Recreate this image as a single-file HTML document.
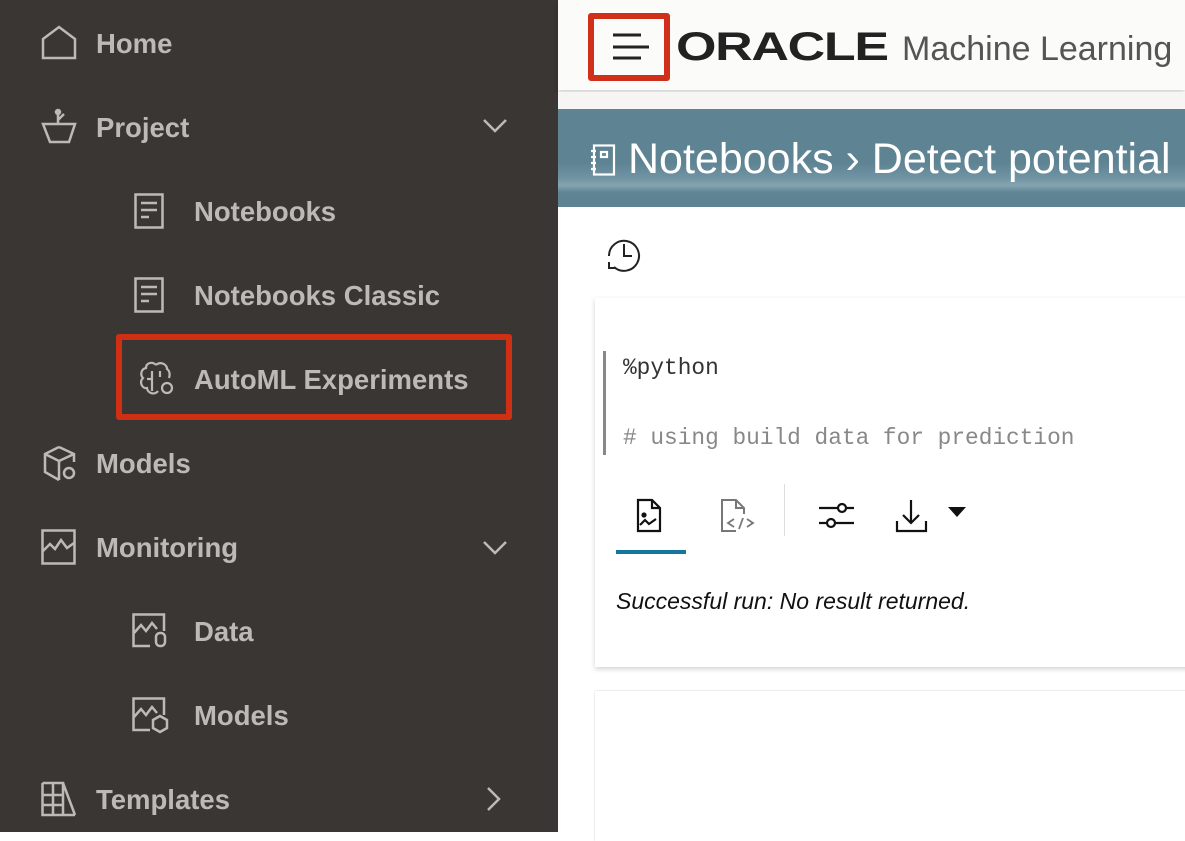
<!DOCTYPE html>
<html><head><meta charset="utf-8"><style>
*{margin:0;padding:0;box-sizing:border-box}
body{width:1185px;height:832px;overflow:hidden;position:relative;background:#fff;font-family:"Liberation Sans",sans-serif}
#side{position:absolute;left:0;top:0;width:558px;height:832px;background:#3a3633}
.it{position:absolute;color:#bcbab7;font-weight:bold;font-size:27.5px;line-height:30px}
.ic{position:absolute}
svg{overflow:visible}
#hdr{position:absolute;left:558px;top:0;width:627px;height:90px;background:#fbfbfa;box-shadow:0 2px 4px rgba(0,0,0,.2)}
#gap{position:absolute;left:558px;top:92px;width:627px;height:17px;background:#f6f5f3}
#ban{position:absolute;left:558px;top:109px;width:627px;height:98px;background:linear-gradient(180deg,#5e8393 0%,#5e8393 55%,#6f93a2 70%,#86a4b0 78%,#5f8595 85%,#5e8393 100%)}
.card{position:absolute;left:595px;width:600px;background:#fff;box-shadow:0 2px 5px rgba(0,0,0,.18)}
.mono{font-family:"Liberation Mono",monospace;font-size:22.8px;position:absolute}
</style></head><body>
<div id="side">
<svg class="ic" style="left:41px;top:25px" width="36" height="36" viewBox="0 0 36 36" fill="none" stroke="#bcbab7" stroke-width="2.5"><path d="M2 33V14L18 2L34 14V33Z"/></svg>
<div class="it" style="left:96px;top:29px">Home</div>
<svg class="ic" style="left:41px;top:108px" width="36" height="36" viewBox="0 0 36 36" fill="none" stroke="#bcbab7" stroke-width="2.5"><path d="M2 16H34L28 34H9Z"/><path d="M17 16V3M17 12L23 6"/><circle cx="17" cy="4" r="2" fill="#bcbab7"/></svg>
<div class="it" style="left:96px;top:113px">Project</div>
<svg class="ic" style="left:482px;top:118px" width="26" height="16" fill="none" stroke="#bcbab7" stroke-width="2.5"><path d="M2 2L13 13L24 2"/></svg>
<svg class="ic" style="left:134px;top:193px" width="30" height="36" fill="none" stroke="#bcbab7" stroke-width="2.5"><rect x="1.5" y="1.5" width="27" height="33"/><path d="M7 10H23M7 17H23M7 24H15"/></svg>
<div class="it" style="left:194px;top:197px">Notebooks</div>
<svg class="ic" style="left:134px;top:277px" width="30" height="36" fill="none" stroke="#bcbab7" stroke-width="2.5"><rect x="1.5" y="1.5" width="27" height="33"/><path d="M7 10H23M7 17H23M7 24H15"/></svg>
<div class="it" style="left:194px;top:281px">Notebooks Classic</div>
<div style="position:absolute;left:116px;top:334px;width:396px;height:86px;border:6px solid #cf2f12;border-radius:3px"></div>
<svg class="ic" style="left:138px;top:361px" width="38" height="36" fill="none" stroke="#bcbab7" stroke-width="2.2"><path d="M18 4C14 0 8 2 8 7C3 8 2 14 5 17C1 21 4 28 9 27C10 33 17 34 20 30"/><path d="M18 4C22 0 29 3 29 8C32 10 32 14 31 17M14 10V30M14 18H9M22 10V16"/><circle cx="29" cy="27" r="5"/></svg>
<div class="it" style="left:194px;top:365px">AutoML Experiments</div>
<svg class="ic" style="left:42px;top:445px" width="36" height="36" fill="none" stroke="#bcbab7" stroke-width="2.5"><path d="M17 2L32 9V17M17 2L3 9V27L17 35M3 9L17 16L32 9M17 16V35"/><circle cx="27" cy="28" r="5"/></svg>
<div class="it" style="left:96px;top:449px">Models</div>
<svg class="ic" style="left:41px;top:529px" width="36" height="36" fill="none" stroke="#bcbab7" stroke-width="2.5"><rect x="1.5" y="1.5" width="32" height="33"/><path d="M2 22L9 15L14 20L20 11L26 19L33 14"/></svg>
<div class="it" style="left:96px;top:533px">Monitoring</div>
<svg class="ic" style="left:482px;top:540px" width="26" height="16" fill="none" stroke="#bcbab7" stroke-width="2.5"><path d="M2 2L13 13L24 2"/></svg>
<svg class="ic" style="left:132px;top:613px" width="36" height="36" fill="none" stroke="#bcbab7" stroke-width="2.5"><path d="M18 33H1.5V1.5H32V18"/><path d="M2 20L9 12L14 18L20 10L25 16"/><rect x="24" y="20" width="9" height="13" rx="4"/></svg>
<div class="it" style="left:194px;top:617px">Data</div>
<svg class="ic" style="left:132px;top:697px" width="36" height="36" fill="none" stroke="#bcbab7" stroke-width="2.5"><path d="M18 33H1.5V1.5H32V18"/><path d="M2 20L9 12L14 18L20 10L25 16"/><path d="M28 19L35 23V31L28 35L21 31V23Z"/></svg>
<div class="it" style="left:194px;top:701px">Models</div>
<svg class="ic" style="left:41px;top:781px" width="36" height="36" fill="none" stroke="#bcbab7" stroke-width="2.5"><path d="M1.5 2V34H34M1.5 2H12V34M12 2H22V34M22 2L34 34M1.5 14H22M1.5 24H22"/></svg>
<div class="it" style="left:96px;top:785px">Templates</div>
<svg class="ic" style="left:486px;top:786px" width="16" height="26" fill="none" stroke="#bcbab7" stroke-width="2.5"><path d="M2 2L13 13L2 24"/></svg>
</div>
<div id="hdr">
<div style="position:absolute;left:30px;top:13px;width:82px;height:68px;border:6px solid #d0301a;border-radius:3px"></div>
<svg class="ic" style="left:53px;top:31px" width="40" height="30"><path d="M2 4H30M2 16H38M2 27H30" stroke="#222" stroke-width="3"/></svg>
<div style="position:absolute;left:118px;top:25px;font-size:40px;line-height:44px;font-weight:bold;color:#222;letter-spacing:-1px;transform:scaleX(1.3);transform-origin:left">ORACLE</div>
<div style="position:absolute;left:344px;top:29px;font-size:34px;line-height:40px;color:#555">Machine Learning</div>
</div>
<div id="gap"></div>
<div id="ban">
<svg class="ic" style="left:32px;top:35px" width="26" height="32" fill="none" stroke="#fff" stroke-width="2.2"><rect x="4" y="1.5" width="20" height="29"/><rect x="11" y="8" width="6" height="5"/><path d="M1 7H6M1 13H6M1 19H6M1 25H6"/></svg>
<div style="position:absolute;left:70px;top:27px;font-size:43px;line-height:46px;color:#fff;white-space:nowrap">Notebooks › Detect potential</div>
</div>
<svg class="ic" style="left:606px;top:236px" width="36" height="36" fill="none" stroke="#222" stroke-width="2"><path d="M8 31A15 15 0 1 0 3 20"/><path d="M3 26V32H9"/><path d="M18 8V20H26"/></svg>
<div class="card" style="top:298px;height:369px">
<div style="position:absolute;left:8px;top:53px;width:3px;height:104px;background:#888"></div>
<div class="mono" style="left:28px;top:57px;color:#333">%python</div>
<div class="mono" style="left:28px;top:127px;color:#888"># using build data for prediction</div>
<svg class="ic" style="left:41px;top:200px" width="28" height="36" fill="none" stroke="#111" stroke-width="2.2"><path d="M2 2H16L24 10V33H2Z M16 2V10H24"/><circle cx="8" cy="17" r="1.5" fill="#111"/><path d="M4 27L9 22L13 26L20 21"/></svg>
<svg class="ic" style="left:125px;top:200px" width="34" height="36" fill="none" stroke="#777" stroke-width="2"><path d="M16 33H2V2H16L24 10V16M16 2V10H24"/><path d="M14 21L8 25L14 29M19 31L23 20M27 21L33 25L27 29" stroke-width="1.8"/></svg>
<div style="position:absolute;left:189px;top:186px;width:1px;height:52px;background:#ddd"></div>
<svg class="ic" style="left:223px;top:203px" width="36" height="28" fill="none" stroke="#111" stroke-width="2.2"><path d="M1 7H20M28 7H36M1 22H9M17 22H36"/><circle cx="24" cy="7" r="4"/><circle cx="13" cy="22" r="4"/></svg>
<svg class="ic" style="left:300px;top:200px" width="36" height="36" fill="none" stroke="#111" stroke-width="2.2"><path d="M2 23V33H31V23M16 2V25M8 17L16 25L24 17"/></svg>
<svg class="ic" style="left:353px;top:209px" width="18" height="12"><path d="M0 0H18L9 10Z" fill="#111"/></svg>
<div style="position:absolute;left:21px;top:252px;width:70px;height:4px;background:#13789c"></div>
<div style="position:absolute;left:21px;top:290px;font-size:23px;font-style:italic;color:#111">Successful run: No result returned.</div>
</div>
<div class="card" style="top:691px;height:150px;box-shadow:0 0 2px rgba(0,0,0,.2)"></div>
</body></html>
